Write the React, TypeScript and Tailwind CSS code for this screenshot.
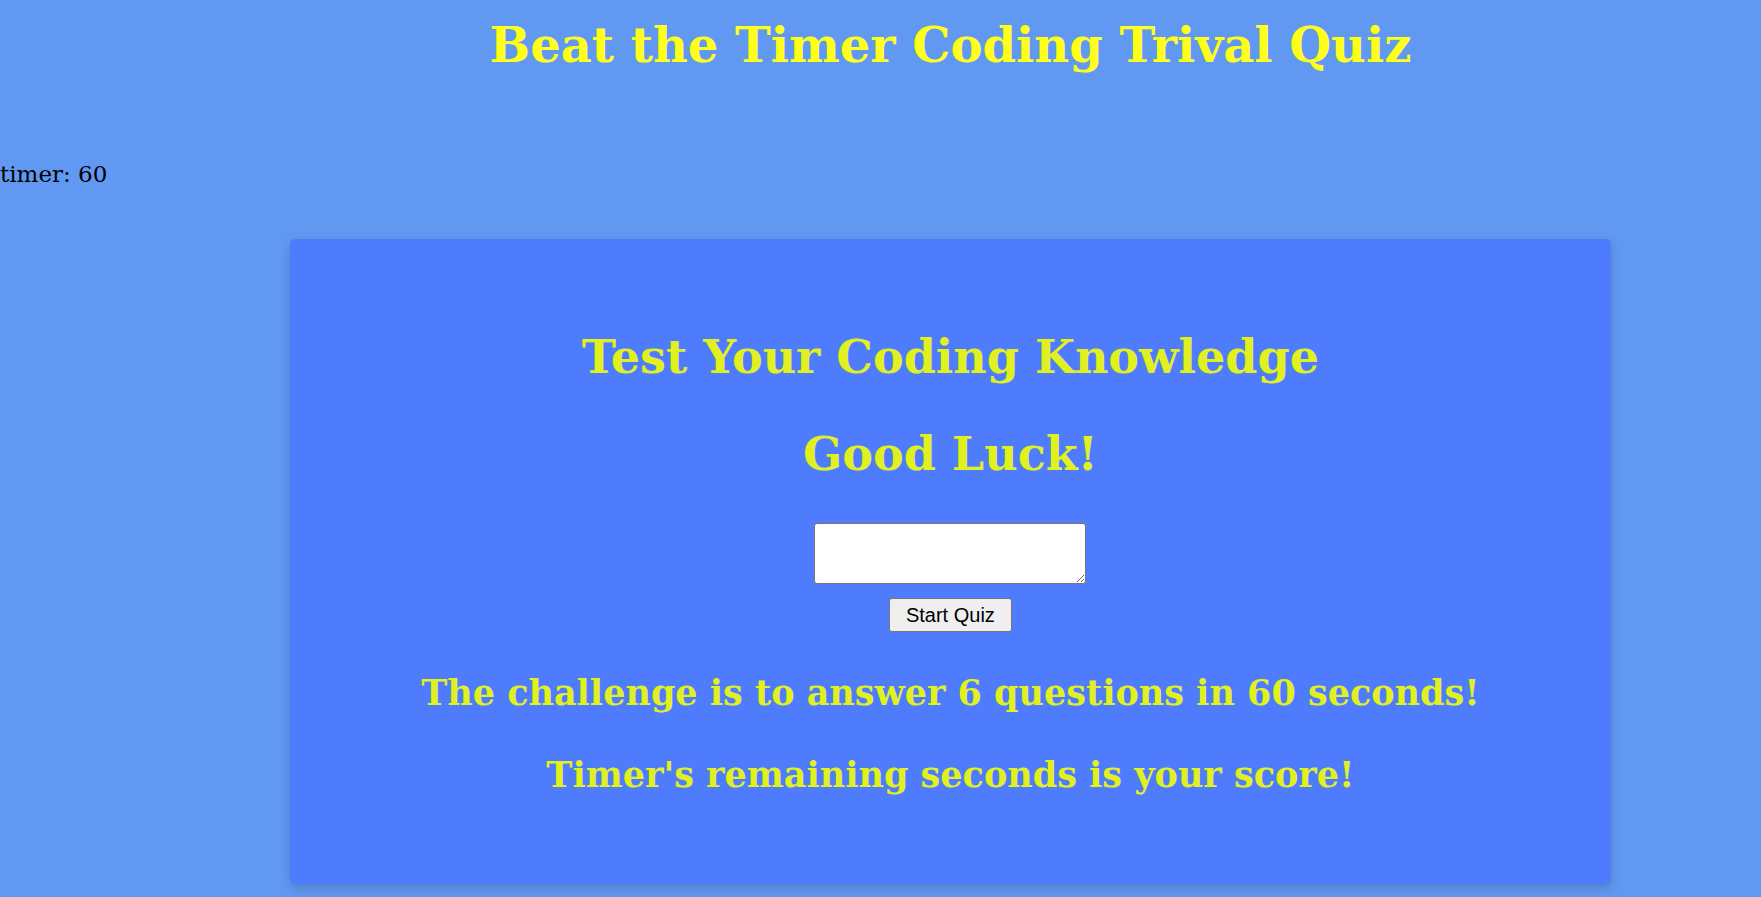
export default function App() {
  return (
    <div className="min-h-screen bg-[#6199f2] pb-[13px] font-['DejaVu_Serif',serif] text-black">
      {/* Page title */}
      <h1 className="pl-[140px] pt-[17px] text-center text-[48px] leading-[56px] font-bold text-[#ffff1a]">
        Beat the Timer Coding Trival Quiz
      </h1>

      <p className="mt-[89px] text-[23px] leading-[24px]">timer: 60</p>

      {/* Quiz card */}
      <div className="mt-[53px] ml-[290px] w-3/4 rounded-[5px] bg-[#4f7cfc] pt-[90px] pb-[89px] text-center text-[#e1f01f] shadow-[0_4px_12px_rgba(0,0,0,0.18)]">
        <h2 className="text-[46px] leading-[56px] font-bold">Test Your Coding Knowledge</h2>
        <h2 className="mt-[41px] text-[46px] leading-[56px] font-bold">Good Luck!</h2>

        <div className="mt-[41px] flex flex-col items-center gap-[14px]">
          <textarea className="block h-[61px] w-[272px] rounded-[3px] border border-[#767676] bg-white" />
          <button className="h-[34px] w-[123px] rounded-[3px] border border-[#767676] bg-[#efefef] font-['Liberation_Sans',sans-serif] text-[20px] text-black">
            Start Quiz
          </button>
        </div>

        <h3 className="mt-[41px] text-[35px] leading-[40px] font-bold">
          The challenge is to answer 6 questions in 60 seconds!
        </h3>
        <h3 className="mt-[42px] text-[35px] leading-[40px] font-bold">
          Timer's remaining seconds is your score!
        </h3>
      </div>
    </div>
  )
}
